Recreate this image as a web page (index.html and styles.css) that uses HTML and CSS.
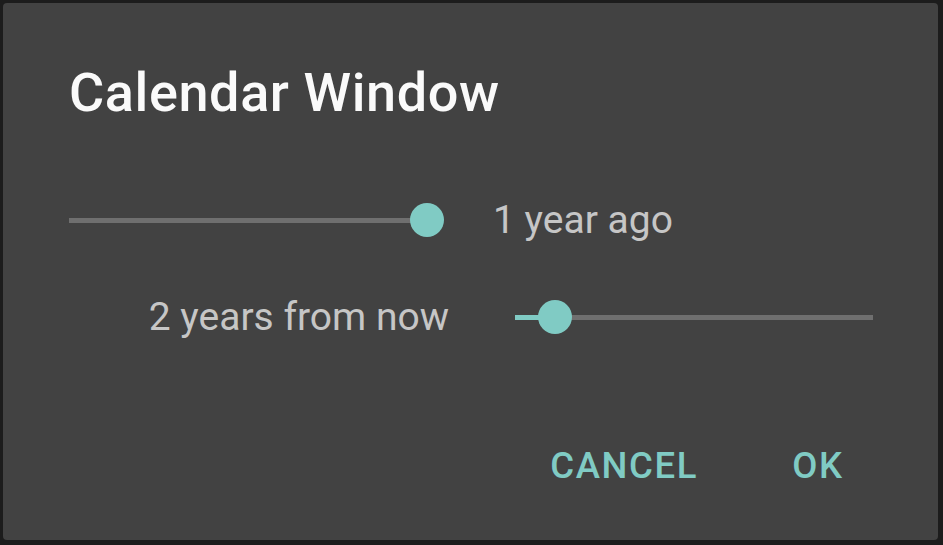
FILE: index.html
```html
<!DOCTYPE html>
<html>
<head>
<meta charset="utf-8">
<link rel="stylesheet" href="styles.css">
</head>
<body>
<div class="dialog">
  <h1 class="title">Calendar Window</h1>
  <div class="rows">
    <div class="cell slider-cell-left">
      <div class="slider s1">
        <div class="track"></div>
        <div class="thumb" style="left:100%"></div>
      </div>
    </div>
    <div class="cell label label-left">1 year ago</div>
    <div class="cell label label-right">2 years from now</div>
    <div class="cell slider-cell-right">
      <div class="slider s2">
        <div class="track"></div>
        <div class="fill" style="width:11.2%"></div>
        <div class="thumb" style="left:11.2%"></div>
      </div>
    </div>
  </div>
  <div class="actions">
    <span class="btn cancel">CANCEL</span>
    <span class="btn ok">OK</span>
  </div>
</div>
</body>
</html>
```
FILE: styles.css
```css
html, body {
  margin: 0;
  padding: 0;
  background: #1c1c1c;
}
body {
  width: 943px;
  height: 545px;
  padding: 3px;
  box-sizing: border-box;
  font-family: Roboto, "Liberation Sans", sans-serif;
}
.dialog {
  width: 935px;
  height: 537px;
  background: #424242;
  border-radius: 4px;
  box-sizing: border-box;
  padding: 58px 0 0 0;
  display: flex;
  flex-direction: column;
}
.title {
  margin: 0 0 0 66px;
  font-size: 54px;
  line-height: 63px;
  font-weight: 500;
  letter-spacing: 0.6px;
  color: #fafafa;
}
.rows {
  margin-top: 66px;
  display: grid;
  grid-template-columns: 446px 1fr;
  grid-template-rows: 60px 60px;
  row-gap: 37px;
}
.cell {
  display: flex;
  align-items: center;
}
.label {
  font-size: 39px;
  color: #c6c6c6;
}
.label-left {
  padding-left: 44px;
}
.label-right {
  justify-content: flex-end;
}
.slider-cell-left {
  padding-left: 66px;
}
.slider-cell-right {
  padding-left: 66px;
}
.slider {
  position: relative;
  height: 34px;
}
.s1 { width: 358px; }
.s2 { width: 358px; }
.track {
  position: absolute;
  left: 0;
  right: 0;
  top: 14.5px;
  height: 5px;
  background: #6f6f6f;
}
.fill {
  position: absolute;
  left: 0;
  top: 14.5px;
  height: 5px;
  background: #80cbc4;
}
.thumb {
  position: absolute;
  top: 0;
  width: 34px;
  height: 34px;
  margin-left: -17px;
  border-radius: 50%;
  background: #80cbc4;
}
.actions {
  margin-top: 98px;
  display: flex;
  justify-content: flex-end;
  padding-right: 43px;
  gap: 24px;
}
.btn {
  font-size: 36.5px;
  line-height: 42px;
  font-weight: 500;
  letter-spacing: 1.6px;
  color: #80cbc4;
  text-align: center;
}
.cancel {
  padding: 0 19px;
}
.ok {
  min-width: 154px;
}
```
